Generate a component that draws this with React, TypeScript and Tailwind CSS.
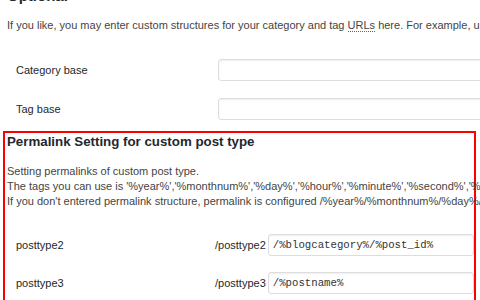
export default function App() {
  return (
    <div className="w-[480px] h-[300px] overflow-hidden bg-white font-['Liberation_Sans',Arial,sans-serif] text-[11px] text-[#444]">
      <div className="pl-[7px]">
        <h2 className="-mt-[15px] h-[21px] text-[15px] leading-[21px] font-bold text-[#23282d]">Optional</h2>
        <p className="mt-[10px] leading-[19px] whitespace-nowrap">
          If you like, you may enter custom structures for your category and tag{" "}
          <abbr className="no-underline border-b border-dotted border-[#666]">URLs</abbr> here. For example, using
          <code> topics</code> as your category base would make your category links like
        </p>

        <div className="mt-[23px] flex items-center h-[22px]">
          <label className="w-[211px] shrink-0 pl-[9px] text-[#23282d]">Category base</label>
          <input className="w-[300px] shrink-0 h-[22px] border border-[#ddd] rounded-[3px] bg-white shadow-[inset_0_1px_2px_rgba(0,0,0,0.07)]" />
        </div>
        <div className="mt-[17px] flex items-center h-[22px]">
          <label className="w-[211px] shrink-0 pl-[9px] text-[#23282d]">Tag base</label>
          <input className="w-[300px] shrink-0 h-[22px] border border-[#ddd] rounded-[3px] bg-white shadow-[inset_0_1px_2px_rgba(0,0,0,0.07)]" />
        </div>

        <div className="mt-[11px] -ml-[4px] w-[473px] h-[200px] border-2 border-[#ff0000] pl-[2px]">
          <h3 className="text-[13.3px] leading-[18px] font-bold text-[#23282d]">Permalink Setting for custom post type</h3>
          <p className="mt-[13px] leading-[15px] whitespace-nowrap">
            Setting permalinks of custom post type.
            <br />
            The tags you can use is '%year%','%monthnum%','%day%','%hour%','%minute%','%second%','%postname%','%post_id%','%author%','%category%'
            <br />
            If you don't entered permalink structure, permalink is configured /%year%/%monthnum%/%day%/%post_id%/.
          </p>

          <div className="mt-[25px] flex items-center h-[22px]">
            <label className="w-[208px] shrink-0 pl-[9px] text-[#23282d]">posttype2</label>
            <span className="shrink-0 text-[#23282d]">/posttype2</span>
            <input
              defaultValue="/%blogcategory%/%post_id%"
              className="ml-[2px] flex-1 min-w-0 h-[22px] border border-[#ddd] rounded-[3px] bg-white pl-[4px] font-['Liberation_Mono',monospace] text-[10.7px] text-[#333] shadow-[inset_0_1px_2px_rgba(0,0,0,0.07)]"
            />
          </div>
          <div className="mt-[16px] flex items-center h-[22px]">
            <label className="w-[208px] shrink-0 pl-[9px] text-[#23282d]">posttype3</label>
            <span className="shrink-0 text-[#23282d]">/posttype3</span>
            <input
              defaultValue="/%postname%"
              className="ml-[2px] flex-1 min-w-0 h-[22px] border border-[#ddd] rounded-[3px] bg-white pl-[4px] font-['Liberation_Mono',monospace] text-[10.7px] text-[#333] shadow-[inset_0_1px_2px_rgba(0,0,0,0.07)]"
            />
          </div>
        </div>
      </div>
    </div>
  );
}
